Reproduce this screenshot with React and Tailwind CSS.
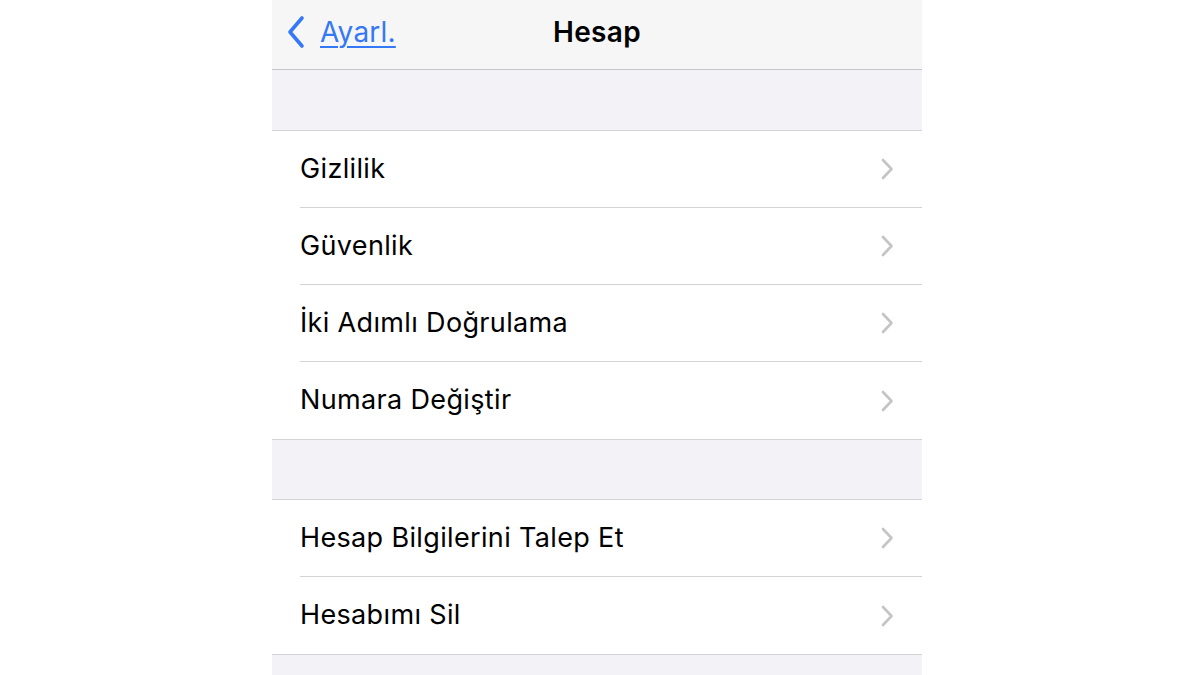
const groups = [
  ["Gizlilik", "Güvenlik", "İki Adımlı Doğrulama", "Numara Değiştir"],
  ["Hesap Bilgilerini Talep Et", "Hesabımı Sil"],
];

function Chevron() {
  return (
    <svg width="14" height="24" viewBox="0 0 14 24" fill="none" className="shrink-0">
      <path d="M3 3l8.5 9L3 21" stroke="#c4c4c7" strokeWidth="2.6" strokeLinecap="round" strokeLinejoin="round" />
    </svg>
  );
}

function Row({ label, last }) {
  return (
    <div className="flex h-[77px] items-stretch pl-[28px] bg-white">
      <div className={`flex flex-1 items-center justify-between pr-[28px] ${last ? "" : "border-b border-[#d4d4d6]"}`}>
        <span className="text-[27px] leading-none pb-[2px] text-black tracking-[0.35px]">{label}</span>
        <Chevron />
      </div>
    </div>
  );
}

export default function App() {
  return (
    <div className="flex justify-start pl-[272px] bg-white h-[675px] overflow-hidden" style={{ fontFamily: "Inter, 'Noto Sans', sans-serif" }}>
      <div className="w-[650px] flex flex-col bg-[#f2f2f7]">
        <header className="relative flex h-[70px] shrink-0 items-center pb-[5px] bg-[#f6f6f6] border-b border-[#c6c6c8]">
          <a className="flex items-center gap-[14px] pl-[14px] text-[#3478f6] cursor-pointer">
            <svg width="20" height="34" viewBox="0 0 20 34" fill="none">
              <path d="M16 3L4 17l12 14" stroke="#3478f6" strokeWidth="3.6" strokeLinecap="round" strokeLinejoin="round" />
            </svg>
            <span className="text-[28px] underline underline-offset-[4px] decoration-[2px] tracking-[0.2px]">Ayarl.</span>
          </a>
          <h1 className="absolute left-1/2 -translate-x-1/2 text-[28px] font-semibold text-black tracking-[0.3px]">Hesap</h1>
        </header>

        {groups.map((items, gi) => (
          <div key={gi} className={gi === 0 ? "pt-[60px]" : "pt-[59px]"}>
            <div className="border-y border-[#d4d4d6] bg-white">
              {items.map((label, i) => (
                <Row key={label} label={label} last={i === items.length - 1} />
              ))}
            </div>
          </div>
        ))}
      </div>
    </div>
  );
}
